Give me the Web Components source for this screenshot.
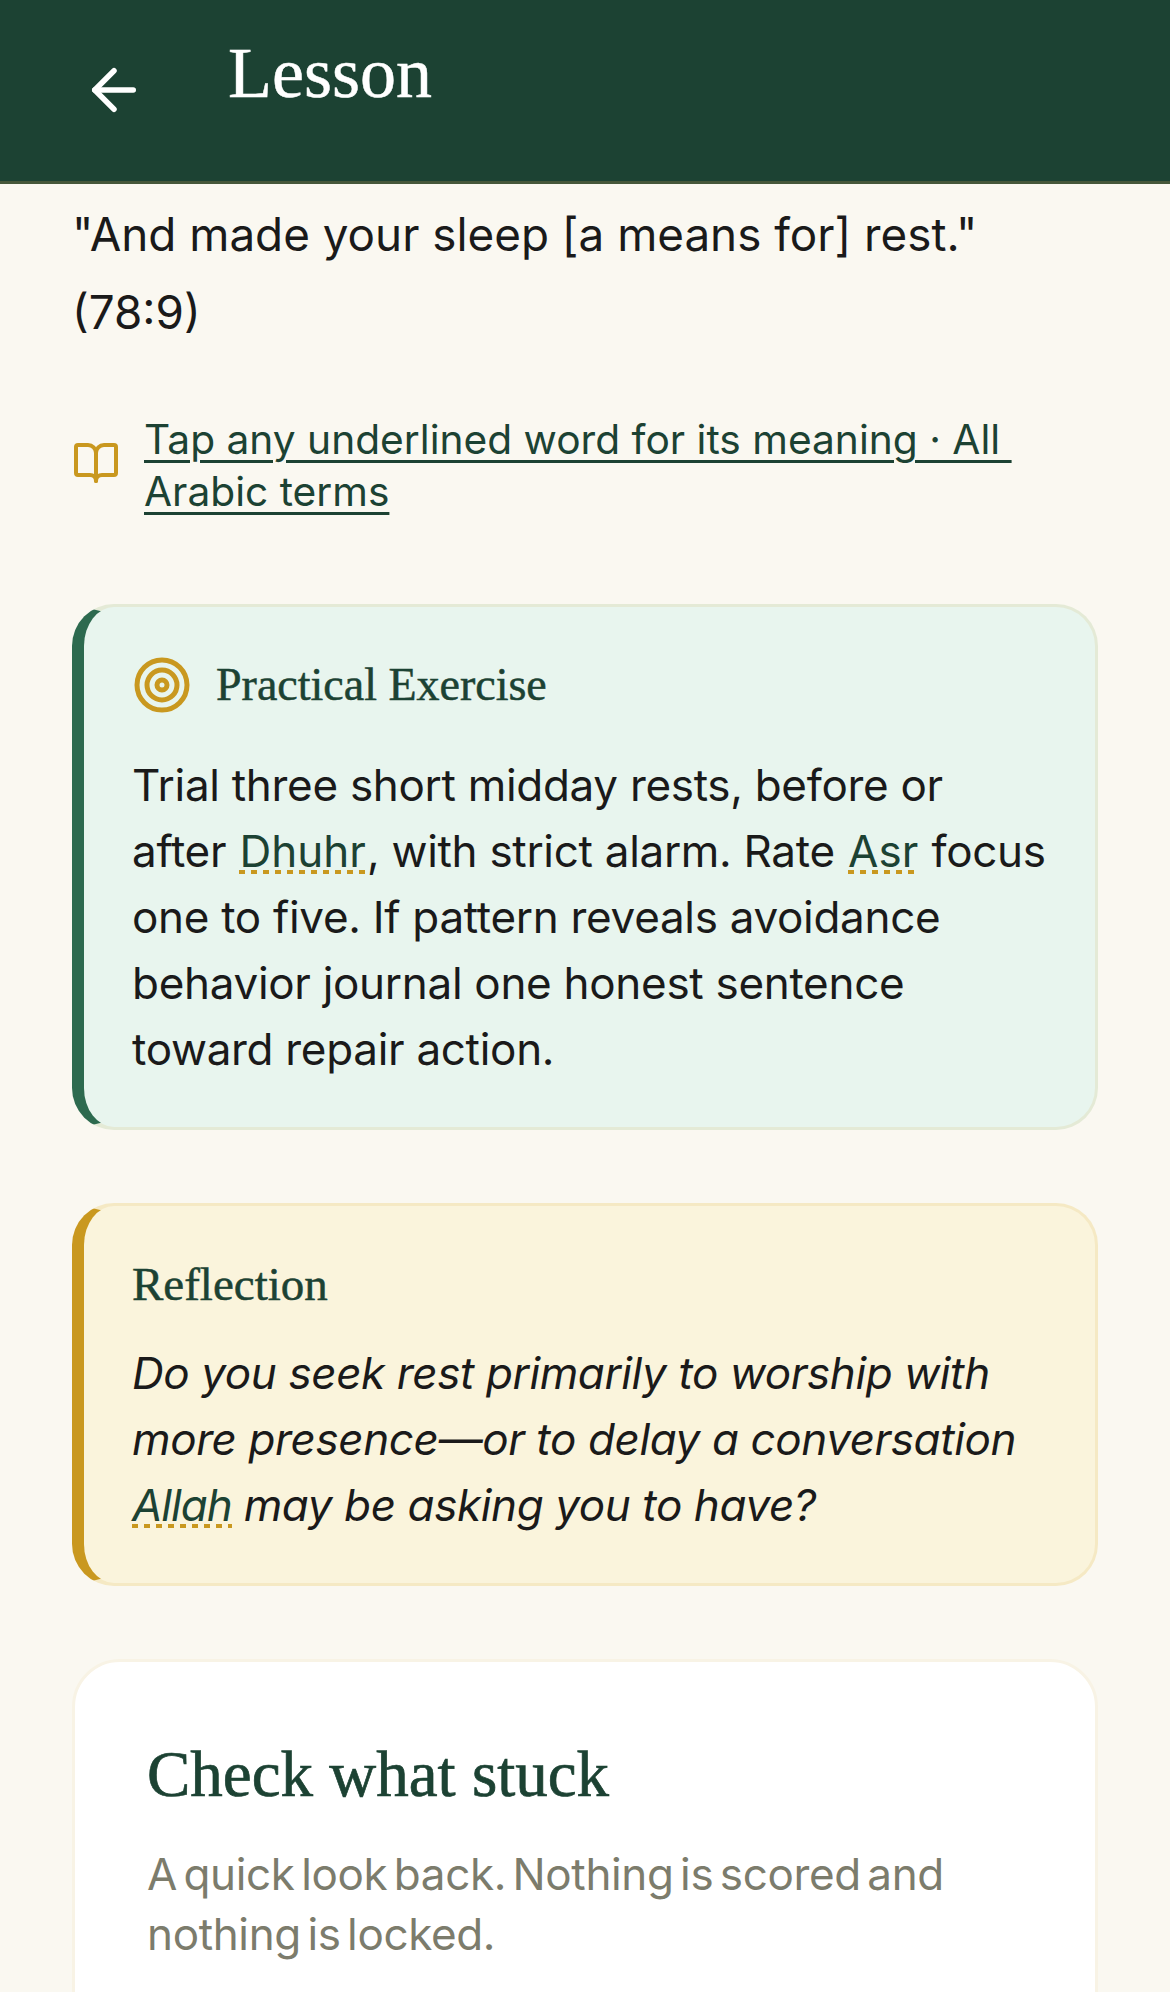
<!DOCTYPE html>
<html lang="en"><head><meta charset="utf-8"><title>Lesson</title>
<style>
html,body{margin:0;padding:0;background:#FAF8F1}
body{font-family:Inter,"Liberation Sans",sans-serif;color:#1a1a1a;height:1992px;overflow:hidden}
</style></head><body>
<lesson-page>
  <app-header title="Lesson"></app-header>
  <lesson-body>
    <lesson-quote>"And made your sleep [a means for] rest." (78:9)</lesson-quote>
    <glossary-link>Tap any underlined word for its meaning · All&nbsp;<wbr>Arabic terms</glossary-link>
    <callout-card tone="green" heading="Practical Exercise" icon="target">Trial three short midday rests, before or after <term-word>Dhuhr</term-word>, with strict alarm. Rate <term-word>Asr</term-word> focus one to five. If pattern reveals avoidance behavior journal one honest sentence toward repair action.</callout-card>
    <callout-card tone="gold" heading="Reflection" italic>Do you seek rest primarily to worship with more presence—or to delay a conversation <term-word tight>Allah</term-word> may be asking you to have?</callout-card>
    <quiz-card heading="Check what stuck">A quick look back. Nothing is scored and nothing is locked.</quiz-card>
  </lesson-body>
</lesson-page>
<script>
function def(name, css, html){
  customElements.define(name, class extends HTMLElement{
    connectedCallback(){
      if(this.shadowRoot) return;
      const r=this.attachShadow({mode:'open'});
      r.innerHTML='<style>'+css+'</style>'+(typeof html==='function'?html(this):html);
    }
  });
}
const esc=s=>String(s||'').replace(/&/g,'&amp;').replace(/</g,'&lt;');
def('lesson-page',':host{display:block;height:1992px;overflow:hidden}','<slot></slot>');
def('app-header',`:host{display:flex;box-sizing:border-box;height:184px;background:#1C4233;border-bottom:3px solid #46583a;padding:0 72px;align-items:flex-start;gap:81px;color:#fff}
 svg{width:66px;height:66px;flex:none;margin:57px 0 0 9px;display:block}
 h1{margin:30px 0 0;font:400 72px/1.2 "Liberation Serif",serif;color:#fff;-webkit-text-stroke:.5px #fff}`,
 h=>`<svg viewBox="0 0 24 24" fill="none" stroke="#fff" stroke-width="2" stroke-linecap="round" stroke-linejoin="round"><path d="m12 19-7-7 7-7"/><path d="M19 12H5"/></svg><h1>${esc(h.getAttribute('title'))}</h1>`);
def('lesson-body',':host{display:block;padding:0 72px}','<slot></slot>');
def('lesson-quote',`:host{display:block;font:400 45.8px/78px Inter,"Liberation Sans",sans-serif;color:#1a1a1a;padding-top:12px;margin-bottom:62px;max-width:960px}`,'<slot></slot>');
def('glossary-link',`:host{display:flex;align-items:center;gap:24px;margin-bottom:86px}
 svg{width:48px;height:48px;flex:none;margin:0 0 6px 0}
 a{font:400 40.7px/52px Inter,"Liberation Sans",sans-serif;color:#1C4233;text-decoration:underline;text-decoration-thickness:3px;text-underline-offset:6px;flex:1;max-width:900px}`,
 `<svg viewBox="0 0 24 24" fill="none" stroke="#C9981F" stroke-width="2" stroke-linecap="round" stroke-linejoin="round"><path d="M12 7v14"/><path d="M3 18a1 1 0 0 1-1-1V4a1 1 0 0 1 1-1h5a4 4 0 0 1 4 4 4 4 0 0 1 4-4h5a1 1 0 0 1 1 1v13a1 1 0 0 1-1 1h-6a3 3 0 0 0-3 3 3 3 0 0 0-3-3z"/></svg><a href="#"><slot></slot></a>`);
def('callout-card',`:host{display:block;box-sizing:border-box;border:3px solid;border-left-width:12px;border-radius:42px;padding:47px 48px 45px;margin-bottom:73px;font:400 44px/66px Inter,"Liberation Sans",sans-serif;letter-spacing:-.3px;color:#1a1a1a}
 :host([tone=green]){background:#E8F5EE;border-color:#E4EAD6;border-left-color:#2D6A4F}
 :host([tone=gold]){background:#FAF4DC;border-color:#F5E9C4;border-left-color:#C9981F}
 :host([italic]){font-style:italic;letter-spacing:-.4px}
 header{display:flex;align-items:center;gap:24px;height:62px;margin-bottom:25px}
 :host([icon]) header{margin-bottom:36px}
 svg{width:60px;height:60px;flex:none}
 h2{margin:0;font:400 46px/62px "Liberation Serif",serif;letter-spacing:0;color:#1C4233;-webkit-text-stroke:.5px #1C4233}
 :host([tone=gold]) h2{font-size:47px}`,
 h=>`<header>${h.getAttribute('icon')?`<svg viewBox="0 0 24 24" fill="none" stroke="#C9981F" stroke-width="2"><circle cx="12" cy="12" r="10"/><circle cx="12" cy="12" r="6"/><circle cx="12" cy="12" r="2"/></svg>`:''}<h2>${esc(h.getAttribute('heading'))}</h2></header><slot></slot>`);
def('term-word',`:host{display:inline;color:#1C4233;margin:0 1.2px;letter-spacing:0;background:repeating-linear-gradient(90deg,#C9981F 0 6px,transparent 6px 12px) left bottom 4px/100% 4px no-repeat}
 :host([tight]){margin:0;letter-spacing:-1px}`,'<slot></slot>');
def('quiz-card',`:host{display:block;box-sizing:border-box;background:#fff;border:3px solid #F8F3E5;border-radius:48px;padding:72px 72px 72px;height:600px}
 h2{margin:0 0 30px;font:400 65px/80px "Liberation Serif",serif;color:#1C4233;-webkit-text-stroke:.7px #1C4233}
 p{margin:0;font:400 44px/60px Inter,"Liberation Sans",sans-serif;color:#7C7C6C;letter-spacing:-.36px;word-spacing:-5.5px}`,
 h=>`<h2>${esc(h.getAttribute('heading'))}</h2><p><slot></slot></p>`);
</script>
</body></html>
